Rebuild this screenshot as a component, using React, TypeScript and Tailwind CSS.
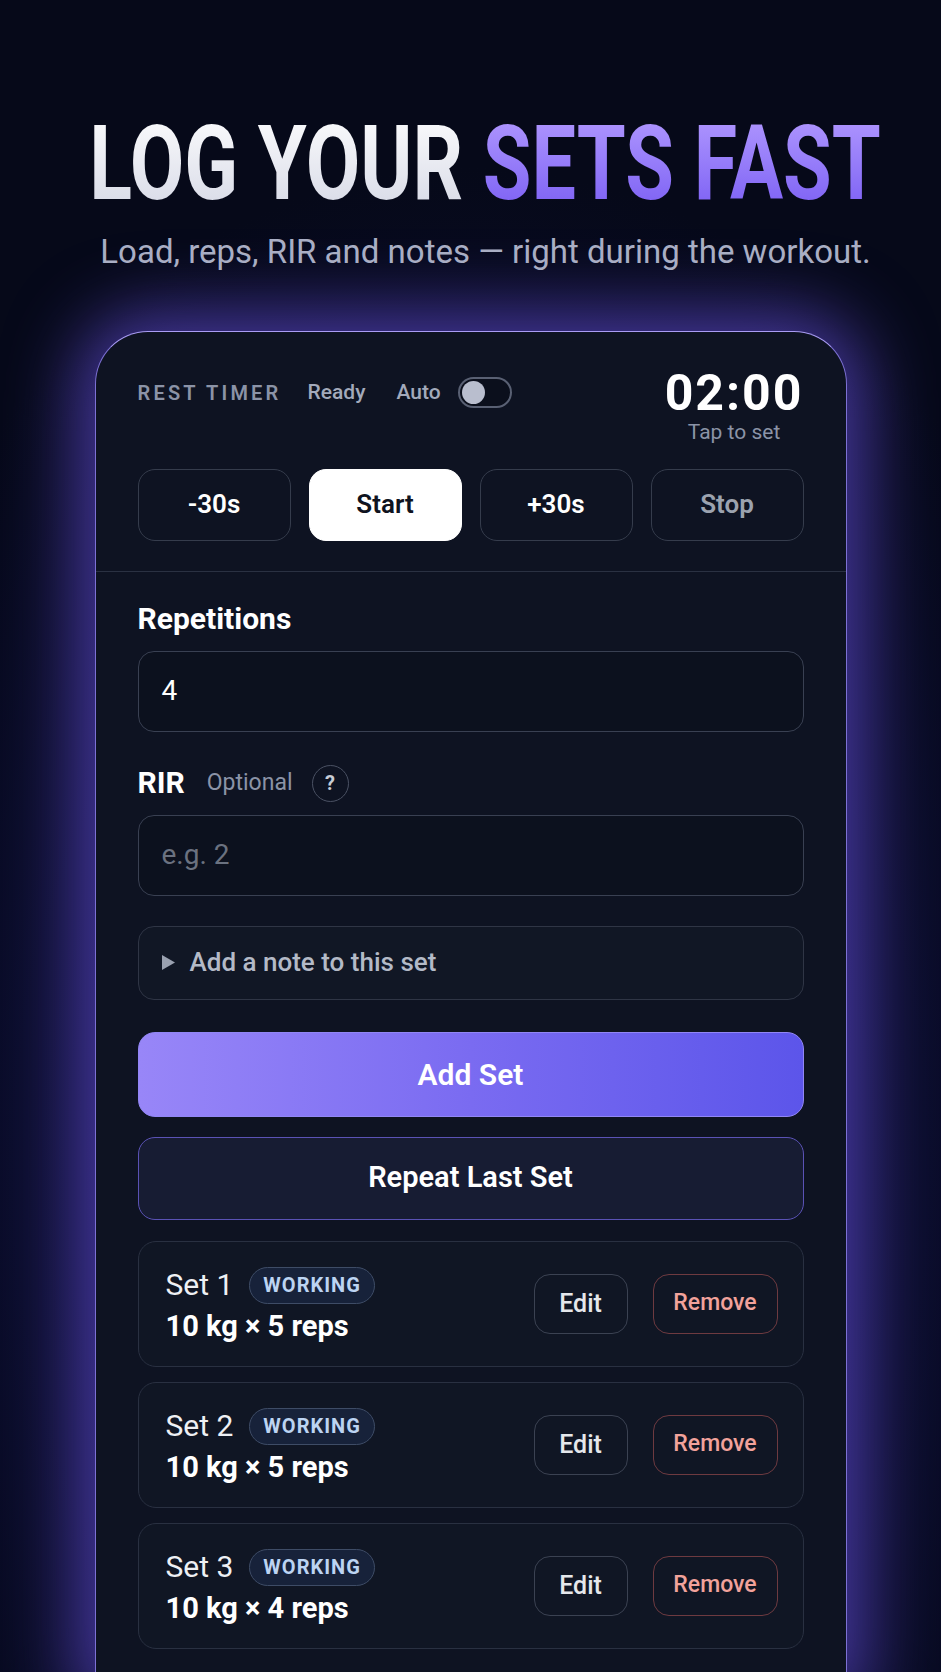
import React from "react";

type SetRow = { n: number; load: string };

const SETS: SetRow[] = [
  { n: 1, load: "10 kg × 5 reps" },
  { n: 2, load: "10 kg × 5 reps" },
  { n: 3, load: "10 kg × 4 reps" },
];

function Toggle() {
  return (
    <div className="flex h-[31px] w-[54px] items-center rounded-full border-2 border-[#596073] bg-[#0b0f1c]">
      <div className="ml-[2px] h-[23px] w-[23px] rounded-full bg-[#b9bece]" />
    </div>
  );
}

function TimerButton({ label, variant }: { label: string; variant?: "primary" | "muted" }) {
  const cls =
    variant === "primary"
      ? "bg-white text-[#0f1320] border-white"
      : variant === "muted"
      ? "text-[#9ca3af] border-[#353c4c]"
      : "text-white border-[#353c4c]";
  return (
    <button className={`flex h-[72px] items-center justify-center rounded-[17px] border text-[26px] font-semibold ${cls}`}>
      {label}
    </button>
  );
}

function SetCard({ row }: { row: SetRow }) {
  return (
    <div className="flex items-center justify-between rounded-[18px] border border-[#293041] bg-[#101624] pl-[27px] pr-[25px] pt-[25px] pb-[25px]">
      <div className="flex flex-col">
        <div className="flex h-[37px] items-center">
          <span className="text-[30px] leading-none text-[#eef0f4]">Set {row.n}</span>
          <span className="ml-[16px] flex h-[37px] items-center rounded-full border border-[#3e4c66] bg-[#17223a] px-[13px] text-[20px] font-bold tracking-[0.05em] text-[#bcd4f2]">
            WORKING
          </span>
        </div>
        <div className="mt-[8px] text-[29px] font-bold leading-none text-white">{row.load}</div>
      </div>
      <div className="flex items-center">
        <button className="flex h-[60px] w-[94px] items-center justify-center rounded-[16px] border border-[#3b4252] text-[25px] font-medium text-[#e5e7eb]">
          Edit
        </button>
        <button className="ml-[25px] flex h-[60px] w-[125px] items-center justify-center rounded-[16px] border border-[#6e3a40] text-[23px] font-medium text-[#f2a29b]">
          Remove
        </button>
      </div>
    </div>
  );
}

export default function App() {
  return (
    <div className="h-[1672px] w-full overflow-hidden bg-[#060919] bg-[radial-gradient(ellipse_75%_60%_at_50%_70%,#17144f_0%,#0c0e30_55%,#060919_100%)] font-['Roboto',sans-serif]">
      <header className="pl-[30px] pt-[112px] text-center">
        <div className="flex justify-center">
          <h1 className="shrink-0 origin-center scale-x-[0.761] whitespace-nowrap text-[104px] font-bold leading-none">
            <span className="bg-gradient-to-b from-white to-[#d3d6e4] bg-clip-text text-transparent">LOG YOUR </span>
            <span className="bg-gradient-to-b from-[#b79dff] to-[#7757f2] bg-clip-text text-transparent">SETS FAST</span>
          </h1>
        </div>
        <p className="mt-[16px] text-[33px] leading-[1.2] text-[#a9aec4]">
          Load, reps, RIR and notes — right during the workout.
        </p>
      </header>

      <div className="mx-auto mt-[59px] w-[752px] rounded-t-[53px] border border-b-0 border-[#7d71d4] border-t-[#a99cf4] bg-[#0e1322] shadow-[0_0_70px_18px_rgba(112,86,240,0.6)]">
        {/* timer */}
        <div className="border-b border-[#2a3142] px-[42px] pt-[41px] pb-[30px]">
          <div className="flex items-start justify-between">
            <div className="flex h-[40px] items-center">
              <span className="text-[20px] font-semibold tracking-[0.16em] text-[#8b93a7]">REST TIMER</span>
              <span className="ml-[26px] text-[21px] font-medium text-[#a3aabb]">Ready</span>
              <span className="ml-[31px] text-[21px] font-medium text-[#a3aabb]">Auto</span>
              <div className="ml-[17px]">
                <Toggle />
              </div>
            </div>
            <div className="flex flex-col items-center">
              <div className="h-[40px] text-[50px] font-bold leading-[40px] tracking-[0.04em] text-white">02:00</div>
              <div className="mt-[8px] h-[22px] text-[21px] leading-[22px] text-[#8b93a7]">Tap to set</div>
            </div>
          </div>
          <div className="mt-[26px] grid grid-cols-4 gap-[18px]">
            <TimerButton label="-30s" />
            <TimerButton label="Start" variant="primary" />
            <TimerButton label="+30s" />
            <TimerButton label="Stop" variant="muted" />
          </div>
        </div>

        {/* form */}
        <div className="px-[42px] pt-[32px]">
          <div className="text-[30px] font-bold leading-none text-white">Repetitions</div>
          <div className="mt-[17px] flex h-[81px] items-center rounded-[16px] border border-[#394052] bg-[#0c111e] px-[23px] text-[28px] text-white">
            4
          </div>

          <div className="mt-[33px] flex h-[37px] items-center">
            <span className="text-[30px] font-bold leading-none text-white">RIR</span>
            <span className="ml-[22px] text-[23px] text-[#8b93a7]">Optional</span>
            <span className="ml-[19px] flex h-[37px] w-[37px] items-center justify-center rounded-full border border-[#4a5163] text-[20px] font-bold text-[#c7ccd6]">
              ?
            </span>
          </div>
          <div className="mt-[13px] flex h-[81px] items-center rounded-[16px] border border-[#394052] bg-[#0c111e] px-[23px] text-[28px] text-[#6b7280]">
            e.g. 2
          </div>

          <div className="mt-[30px] flex h-[74px] items-center rounded-[16px] border border-[#2f3545] bg-[#111725] px-[23px]">
            <svg width="13" height="15" viewBox="0 0 13 15" className="shrink-0">
              <polygon points="0,0 13,7.5 0,15" fill="#9aa1b0" />
            </svg>
            <span className="ml-[15px] text-[26px] font-medium text-[#b4bac7]">Add a note to this set</span>
          </div>

          <button className="mt-[32px] flex h-[85px] w-full items-center justify-center rounded-[17px] border border-[#9186f5] bg-gradient-to-r from-[#9886f8] via-[#7a6bf1] to-[#5c55ea] text-[30px] font-semibold text-white">
            Add Set
          </button>
          <button className="mt-[20px] flex h-[83px] w-full items-center justify-center rounded-[17px] border border-[#5a52b5] bg-[#171c33] text-[29px] font-semibold text-white">
            Repeat Last Set
          </button>

          <div className="mt-[21px] flex flex-col gap-[15px] pb-[40px]">
            {SETS.map(s => (
              <SetCard key={s.n} row={s} />
            ))}
          </div>
        </div>
      </div>
    </div>
  );
}
